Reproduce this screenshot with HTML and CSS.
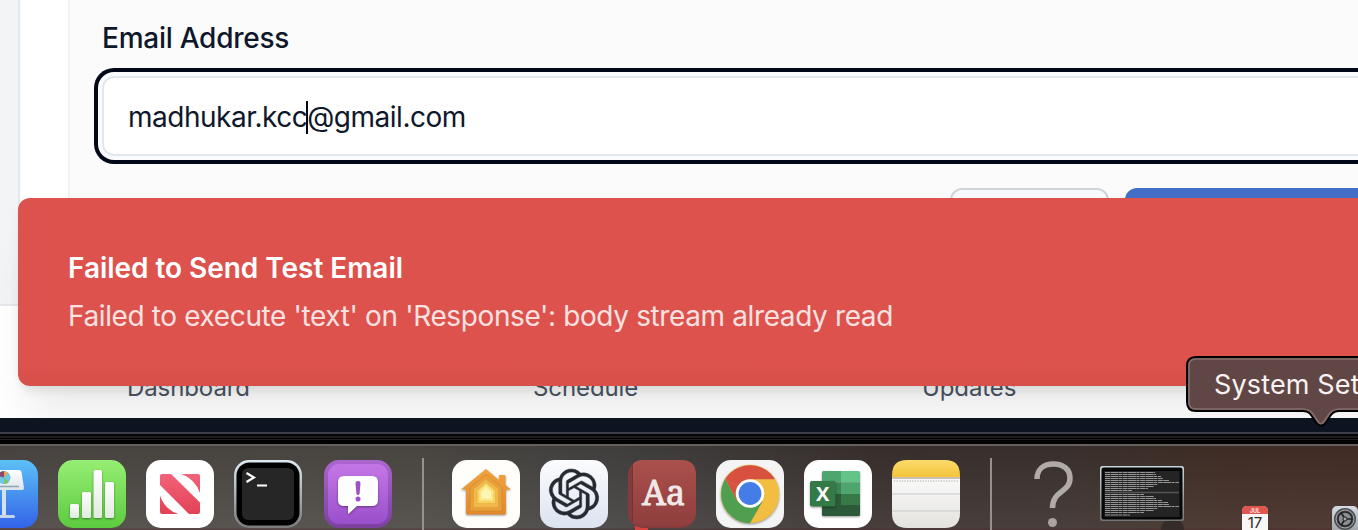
FILE: index.html
```html
<!DOCTYPE html>
<html lang="en">
<head>
<meta charset="utf-8">
<title>Email settings</title>
<link rel="stylesheet" href="styles.css">
</head>
<body>
<div class="screen">
  <div class="browser">
    <div class="page">
      <div class="gutter"></div>
      <div class="panel">
        <label class="label">Email Address</label>
        <div class="input"><span class="value">madhukar.kcc<i class="caret"></i>@gmail.com</span></div>
        <div class="buttons"><div class="btn"></div><div class="btn primary"></div></div>
      </div>
    </div>
    <div class="tabs"><span class="tab t1">Dashboard</span><span class="tab t2">Schedule</span><span class="tab t3">Updates</span></div>
    <div class="toast">
      <div class="toast-title">Failed to Send Test Email</div>
      <div class="toast-text">Failed to execute 'text' on 'Response': body stream already read</div>
    </div>
  </div>
  <div class="edge"></div>
  <div class="dock">
    <!-- Keynote -->
    <svg class="app first" viewBox="0 0 68 68">
      <defs><linearGradient id="kb" x2="0" y2="1"><stop stop-color="#5cc0f6"/><stop offset="1" stop-color="#3263e8"/></linearGradient>
      <linearGradient id="kw" x2="0" y2="1"><stop stop-color="#fff"/><stop offset="1" stop-color="#dce4ea"/></linearGradient></defs>
      <rect width="68" height="68" rx="15" fill="url(#kb)"/>
      <path d="M17 10H49Q51 10 51.500 12L54 28Q54 30 52 30H14Q12 30 12 28L15 12Z" fill="url(#kw)"/>
      <path d="M13 26.500H49" stroke="#8da5b5" stroke-width="1.500"/>
      <circle cx="34" cy="17.500" r="6.500" fill="#70c6e8"/><path d="M34 17.500V11A6.500 6.500 0 0 0 28 16Z" fill="#8c4770"/><path d="M34 17.500V11L38 12.500Z" fill="#f2a63b"/><path d="M34 17.500L39 22A6.500 6.500 0 0 1 34 24Z" fill="#79c66b"/>
      <rect x="32" y="30" width="4" height="26" fill="#d4e0ed"/><rect x="24" y="55" width="21" height="3" rx="1.500" fill="#c3d5ec"/>
    </svg>
    <!-- Numbers -->
    <svg class="app" viewBox="0 0 68 68">
      <defs><linearGradient id="ng" x2="0" y2="1"><stop stop-color="#96ee74"/><stop offset="1" stop-color="#5ccb3f"/></linearGradient>
      <linearGradient id="nw" x2="0" y2="1"><stop stop-color="#fff"/><stop offset="1" stop-color="#e0ebdf"/></linearGradient></defs>
      <rect width="68" height="68" rx="15" fill="url(#ng)"/>
      <g class="soft" fill="url(#nw)"><rect x="12" y="44" width="9" height="14" rx="1.500"/><rect x="24" y="32" width="9" height="26" rx="1.500"/><rect x="35.500" y="10" width="8.500" height="48" rx="1.500"/><rect x="47" y="22" width="9" height="36" rx="1.500"/></g>
    </svg>
    <!-- News -->
    <svg class="app" viewBox="0 0 68 68">
      <defs><linearGradient id="nr" gradientUnits="userSpaceOnUse" x1="0" y1="14" x2="0" y2="54"><stop stop-color="#f2637a"/><stop offset="1" stop-color="#e24256"/></linearGradient></defs>
      <rect width="68" height="68" rx="15" fill="#fff"/>
      <path d="M16 14H25L54 42.500V52Q54 54 52 54H43L14 25V16Q14 14 16 14ZM35.500 14H52Q54 14 54 16V33Q49 19 35.500 14ZM14 35.500Q19 50 32.500 54H16Q14 54 14 52Z" fill="url(#nr)"/>
    </svg>
    <!-- Terminal -->
    <svg class="app" viewBox="0 0 68 68">
      <defs><linearGradient id="tg" x2="0" y2="1"><stop stop-color="#dceaf2"/><stop offset="1" stop-color="#77797b"/></linearGradient></defs>
      <rect width="68" height="68" rx="15" fill="url(#tg)"/><rect x="2.500" y="2.500" width="63" height="63" rx="13" fill="#000"/><rect x="8" y="8" width="52" height="52" rx="6" fill="#262626"/>
      <path d="M12.500 13L20 17.500L12.500 22M23 25.500H33" fill="none" stroke="#fff" stroke-width="2.200"/>
    </svg>
    <!-- Feedback -->
    <svg class="app feedback" viewBox="0 0 68 68">
      <defs><linearGradient id="fo" x2="0" y2="1"><stop stop-color="#ac66cf"/><stop offset="1" stop-color="#7c409f"/></linearGradient><linearGradient id="fi" x2="0" y2="1"><stop stop-color="#c377e6"/><stop offset="1" stop-color="#9a4fcb"/></linearGradient></defs>
      <rect width="68" height="68" rx="15" fill="url(#fo)"/><rect x="4" y="4" width="60" height="60" rx="11" fill="url(#fi)"/>
      <path class="soft" d="M20 16H48Q54 16 54 22V40Q54 46 48 46H33L25 53.500Q24 54.500 24 53V46H20Q14 46 14 40V22Q14 16 20 16Z" fill="#fff"/>
      <path d="M31.500 23Q31.500 21 34 21T36.500 23L35.600 34Q34 36 32.400 34Z" fill="#9d52c4"/><circle cx="34" cy="39" r="2.500" fill="#9d52c4"/>
    </svg>
    <div class="sep"></div>
    <!-- Home -->
    <svg class="app" viewBox="0 0 68 68">
      <defs><linearGradient id="ho" x2="0" y2="1"><stop stop-color="#f1a33c"/><stop offset="1" stop-color="#e2892d"/></linearGradient></defs>
      <rect width="68" height="68" rx="15" fill="#fffefb"/>
      <path class="soft" d="M34 9L47 20V16Q47 15 48 15H52.500Q53.500 15 53.500 16V25L59 29.500H54V53Q54 54.500 52.500 54.500H15.500Q14 54.500 14 53V29.500H9Z" fill="url(#ho)"/>
      <path d="M34 14.500L50 27.500V51H18V27.500Z" fill="#e9a03a" stroke="#cf872e" stroke-width=".7"/>
      <path d="M34 19L46.500 29V47.500H21.500V29Z" fill="#f2b94a" stroke="#d99a36" stroke-width=".6"/>
      <path d="M34 22.500L43.500 30.500V43.500H25V30.500Z" fill="#f9d263" stroke="#deac42" stroke-width=".6"/>
      <path d="M34 26L40 31.500V39.500H28.500V31.500Z" fill="#fff6b4" stroke="#f9e78b" stroke-width="2"/>
    </svg>
    <!-- ChatGPT -->
    <svg class="app" viewBox="0 0 68 68">
      <defs><linearGradient id="cg" x2="0" y2="1"><stop stop-color="#fcfcfe"/><stop offset="1" stop-color="#dbe3f0"/></linearGradient></defs>
      <rect width="68" height="68" rx="15" fill="url(#cg)"/>
      <g transform="translate(8.900 8.900) scale(2.090)"><path fill="#262b31" d="M22.2819 9.8211a5.9847 5.9847 0 0 0-.5157-4.9108 6.0462 6.0462 0 0 0-6.5098-2.9A6.0651 6.0651 0 0 0 4.9807 4.1818a5.9847 5.9847 0 0 0-3.9977 2.9 6.0462 6.0462 0 0 0 .7427 7.0966 5.98 5.98 0 0 0 .511 4.9107 6.051 6.051 0 0 0 6.5146 2.9001A5.9847 5.9847 0 0 0 13.2599 24a6.0557 6.0557 0 0 0 5.7718-4.2058 5.9894 5.9894 0 0 0 3.9977-2.9001 6.0557 6.0557 0 0 0-.7475-7.0729zm-9.022 12.6081a4.4755 4.4755 0 0 1-2.8764-1.0408l.1419-.0804 4.7783-2.7582a.7948.7948 0 0 0 .3927-.6813v-6.7369l2.02 1.1686a.071.071 0 0 1 .038.052v5.5826a4.504 4.504 0 0 1-4.4945 4.4944zm-9.6607-4.1254a4.4708 4.4708 0 0 1-.5346-3.0137l.142.0852 4.783 2.7582a.7712.7712 0 0 0 .7806 0l5.8428-3.3685v2.3324a.0804.0804 0 0 1-.0332.0615L9.74 19.9502a4.4992 4.4992 0 0 1-6.1408-1.6464zM2.3408 7.8956a4.485 4.485 0 0 1 2.3655-1.9728V11.6a.7664.7664 0 0 0 .3879.6765l5.8144 3.3543-2.0201 1.1685a.0757.0757 0 0 1-.071 0l-4.8303-2.7865A4.504 4.504 0 0 1 2.3408 7.872zm16.5963 3.8558L13.1038 8.364 15.1192 7.2a.0757.0757 0 0 1 .071 0l4.8303 2.7913a4.4944 4.4944 0 0 1-.6765 8.1042v-5.6772a.79.79 0 0 0-.407-.667zm2.0107-3.0231l-.142-.0852-4.7735-2.7818a.7759.7759 0 0 0-.7854 0L9.409 9.2297V6.8974a.0662.0662 0 0 1 .0284-.0615l4.8303-2.7866a4.4992 4.4992 0 0 1 6.6802 4.66zM8.3065 12.863l-2.02-1.1638a.0804.0804 0 0 1-.038-.0567V6.0742a4.4992 4.4992 0 0 1 7.3757-3.4537l-.142.0805L8.704 5.459a.7948.7948 0 0 0-.3927.6813zm1.0976-2.3654l2.602-1.4998 2.6069 1.4998v2.9994l-2.5974 1.4997-2.6067-1.4997Z" stroke="#262b31" stroke-width=".2"/></g>
    </svg>
    <!-- Dictionary -->
    <svg class="app" viewBox="0 0 68 68">
      <defs><linearGradient id="dg" x2="0" y2="1"><stop stop-color="#aa504d"/><stop offset="1" stop-color="#8f3e3e"/></linearGradient></defs>
      <rect x="7" y="62" width="13" height="10" fill="#d8423c"/>
      <rect width="68" height="68" rx="15" fill="#853b3b"/><path d="M5 4Q8 0 15 0H53Q68 0 68 15V51Q68 66 53 66H15Q8 66 5 63Z" fill="url(#dg)"/>
      <path d="M4.500 6V62" stroke="#743332" stroke-width="1"/>
      <text class="aa" x="35.500" y="44.500" text-anchor="middle">Aa</text>
    </svg>
    <!-- Chrome -->
    <svg class="app" viewBox="0 0 68 68">
      <rect width="68" height="68" rx="15" fill="#f5f4f4"/>
      <g class="soft"><circle cx="34" cy="34" r="29.300" fill="#f1be42"/>
      <path d="M34 34L9.200 19A29.300 29.300 0 0 1 59 19.300H34Z" fill="#d85040"/>
      <path d="M34 34L21.300 41.300L9.200 19Z" fill="#d85040"/><path d="M9.200 19L21.300 41.300L34 47L46.700 41.300L34 63.300A29.300 29.300 0 0 1 9.200 19Z" fill="#509f51"/></g>
      <circle cx="34" cy="33.500" r="14.300" fill="#fff"/><circle cx="34" cy="33.500" r="11.400" fill="#447de6"/>
    </svg>
    <!-- Excel -->
    <svg class="app" viewBox="0 0 68 68">
      <rect width="68" height="68" rx="15" fill="#fff"/>
      <g class="soft"><path d="M19.500 11H37V22.500H18V12.500Q18 11 19.500 11Z" fill="#4ea56d"/><path d="M37 11H54.500Q56 11 56 12.500V22.500H37Z" fill="#64c389"/><path d="M18 22.500H37V34H18Z" fill="#3d8653"/><path d="M37 22.500H56V34H37Z" fill="#4ea56d"/><path d="M18 34H37V45H18Z" fill="#2c5b39"/><path d="M37 34H56V45H37Z" fill="#387a47"/><path d="M18 45H56V54.500Q56 56 54.500 56H19.500Q18 56 18 54.500Z" fill="#2c5a38"/></g>
      <rect class="soft" x="6" y="21" width="25.500" height="25.500" rx="2" fill="#347a46"/>
      <text class="xl" x="18.700" y="41" text-anchor="middle">X</text>
    </svg>
    <!-- Notes -->
    <svg class="app" viewBox="0 0 68 68">
      <defs><linearGradient id="yt" x2="0" y2="1"><stop stop-color="#fbdc6c"/><stop offset="1" stop-color="#f4c33b"/></linearGradient><linearGradient id="yb" x2="0" y2="1"><stop stop-color="#fafafa"/><stop offset="1" stop-color="#e3e2dd"/></linearGradient></defs>
      <path d="M0 17H68V53Q68 68 53 68H15Q0 68 0 53Z" fill="url(#yb)"/><path d="M0 17V15Q0 0 15 0H53Q68 0 68 15V17Z" fill="url(#yt)"/>
      <path d="M0 18H68" stroke="#b9aca0" stroke-width="1.600"/><path d="M2 21H67" stroke="#aaa" stroke-width="1.200" stroke-dasharray="1.300 1.300"/><path d="M0 34H68M0 51H68" stroke="#d6d5d7" stroke-width="1.500"/>
    </svg>
    <div class="sep"></div>
    <svg class="question" viewBox="0 0 40 70"><path d="M3 19C3 9 10 4 19.500 4S36 9 36 18C36 33 18.500 30 18.500 48" fill="none" stroke="#b1aba7" stroke-width="5.500"/><circle cx="18.500" cy="62.500" r="4.500" fill="#aaa39e"/></svg>
    <!-- Minimised terminal window -->
    <svg class="window" viewBox="0 0 84 64">
      <defs><linearGradient id="wg" x2="0" y2="1"><stop stop-color="#c8d7df"/><stop offset="1" stop-color="#737474"/></linearGradient></defs>
      <circle cx="72.500" cy="64" r="11.500" fill="#352b28"/>
      <rect width="84" height="55" rx="2.500" fill="url(#wg)"/><rect x="1.500" y="1.500" width="81" height="52" rx="2" fill="#080808"/><rect x="4.500" y="5" width="75" height="46" fill="#242424"/>
      <g class="lines"><path d="M5 6.500H55M5 8.500H56M5 10.500H61M5 12.500H63M5 14.500H69M5 16.500H79M5 18.500H58M5 20.500H54M5 22.500H48M5 24.500H32M5 28.500H44M5 30.500H54M5 32.500H56M5 34.500H62M5 36.500H68M5 38.500H69M5 40.500H79M5 42.500H58M5 44.500H54M5 46.500H44M5 49H30"/></g>
      <path d="M5 26.500H79" stroke="#555" stroke-width="1.300"/>
    </svg>
    <!-- Calendar -->
    <svg class="mini cal" viewBox="0 0 26 26"><rect width="26" height="30" rx="5" fill="#f8f7f6"/><path d="M0 8V5Q0 0 5 0H21Q26 0 26 5V8Z" fill="#df5650"/><text class="jul" x="13" y="6.600" text-anchor="middle">JUL</text><text class="day" x="13" y="21.700" text-anchor="middle">17</text></svg>
    <!-- System Settings -->
    <svg class="mini" viewBox="0 0 26 26"><defs><linearGradient id="sg" x2="0" y2="1"><stop stop-color="#d4dbe0"/><stop offset="1" stop-color="#989b9f"/></linearGradient></defs><rect width="26" height="30" rx="5" fill="url(#sg)"/><circle cx="13" cy="13" r="11" fill="#4b4d50"/><circle cx="13" cy="13" r="9" fill="none" stroke="#a8abad" stroke-width="1"/><circle cx="13" cy="13" r="7" fill="#8b8d8f" stroke="#24272a" stroke-width="1.500"/><path d="M13 13L9 6.500M13 13H20.500M13 13L9 19.500" stroke="#202326" stroke-width="1.700"/><circle cx="13" cy="13" r="2" fill="#a6a8aa" stroke="#26282a"/></svg>
  </div>
  <div class="tooltip">
    <svg class="bubble" viewBox="0 0 190 74"><path d="M10 1H220V55H153C146 55 145 59 141 65Q135 74 129 65C125 59 124 55 117 55H10Q1 55 1 46V10Q1 1 10 1Z" fill="#604745" stroke="#000" stroke-width="2"/><path d="M10 3H220V53H153C145 53 143 58 139 64Q135 71 131 64C127 58 125 53 117 53H10Q3 53 3 46V10Q3 3 10 3Z" fill="none" stroke="#826d6b" stroke-width="1.700"/></svg>
    <span class="tip-text">System Set</span>
  </div>
</div>
</body>
</html>
```

FILE: styles.css
```css
* { box-sizing: border-box; }
body { margin: 0; font-family: Inter, "Liberation Sans", sans-serif; }
.screen { position: relative; width: 1358px; height: 530px; overflow: hidden; background: #000; }
.browser { position: relative; display: flex; flex-direction: column; height: 418px; overflow: hidden; background: #fff; }
.page { display: flex; flex: 0 0 304px; overflow: hidden; background: #fff; }
.gutter { flex: none; width: 20px; background: #f3f4f6; border-right: 2px solid #e2e8f0; }
.panel { flex: 1; min-width: 0; margin-left: 48px; padding: 20px 0 0 32px; background: #fbfbfb; border-left: 2px solid #f2f3f4; }
.label { display: block; height: 56px; font-size: 28px; line-height: 37px; font-weight: 500; color: #0f172a; white-space: nowrap; letter-spacing: -.25px; }
.input { display: flex; align-items: center; width: 1400px; height: 80px; padding: 2px 0 0 24px; border: 2px solid #e2e8f0; border-radius: 12px; background: #fff; box-shadow: 0 0 0 4px #fafbfe, 0 0 0 8px #020817; }
.value { font-size: 28px; line-height: 40px; color: #0f172a; white-space: nowrap; letter-spacing: -.49px; }
.caret { display: inline-block; width: 2px; height: 33px; margin: 0 -1px; vertical-align: -7px; background: #020817; }
.buttons { display: flex; gap: 16px; margin: 32px 0 0 848px; }
.btn { flex: none; width: 159px; height: 72px; border: 2px solid #d1d5db; border-radius: 12px; background: #f8fafc; }
.primary { width: 300px; border: 0; background: #4270c8; }
.tabs { position: relative; flex: 1; border-top: 2px solid #e5e7eb; display: flex; align-items: flex-start; padding: 65px 0 0 127px; font-size: 24px; line-height: 33px; letter-spacing: -.1px; color: #4b5563; }
.t1 { width: 406px; }
.t2 { width: 389px; }
.toast { position: absolute; left: 18px; top: 198px; width: 1400px; height: 188px; padding: 50px; border-radius: 12px; background: linear-gradient(#dd524c 85%, #d8504a); color: #fff; box-shadow: 0 44px 44px -10px rgba(0,0,0,.07), 0 8px 12px -4px rgba(0,0,0,.1), 0 0 16px rgba(0,0,0,.02); font-size: 28px; line-height: 40px; white-space: nowrap; }
.toast-title { font-weight: 600; letter-spacing: -.04px; }
.toast-text { margin-top: 8px; line-height: 41px; color: #f8e2e1; letter-spacing: -.38px; }
.edge { height: 28px; background: linear-gradient(#0d1321 0 14px, #3b3e49 14px 16px, #050505 16px 18px, #1c1c1c 18px 20px, #000 20px 21px, #202020 21px 22px, #000 22px 26px, #64605d 26px); }
.dock { display: flex; height: 84px; padding-top: 14px; gap: 20px; overflow: hidden; background: linear-gradient(#0000 82px, #4a252966 83px), linear-gradient(#0001, #fff1), linear-gradient(90deg, #4c4743 0, #4d4944 420px, #434241 620px, #3b312e 870px, #3b322e 1060px, #432e27 1230px, #452d27 1358px); }
.app { flex: none; width: 68px; height: 68px; overflow: visible; }
.first { margin-left: -30px; }
.feedback { margin-left: 2px; }
.sep { flex: none; width: 2px; height: 80px; margin: -2px 8px 0 10px; background: #96918d; }
.question { flex: none; width: 40px; height: 70px; margin-left: 14px; }
.window { flex: none; width: 84px; height: 64px; margin: 6px 0 0 6px; }
.mini { flex: none; width: 26px; height: 26px; margin: 46px 0 0 44px; }
.cal { margin-left: 38px; }
.soft { filter: drop-shadow(0 1px 1px #0006); }
.aa { font: 34px "Noto Serif", "Liberation Serif", serif; fill: #f1e9e7; stroke: #f1e9e7; stroke-width: .9px; }
.xl { font: 700 20px "Open Sans", sans-serif; fill: #fff; }
.jul { font: 700 5.500px Inter, sans-serif; fill: #ffe4e2; }
.day { font: 15px Inter, sans-serif; fill: #292929; }
.lines { fill: none; stroke: #969696; stroke-width: 1.100; stroke-dasharray: 5 .5 8 .4 3 .7; }
.tooltip { position: absolute; left: 1186px; top: 356px; width: 190px; height: 74px; padding: 12px 0 0 28px; }
.bubble { position: absolute; left: 0; top: 0; width: 190px; height: 74px; }
.tip-text { position: relative; font-size: 27px; line-height: 34px; letter-spacing: .15px; color: #f8f3f2; white-space: nowrap; }
```
